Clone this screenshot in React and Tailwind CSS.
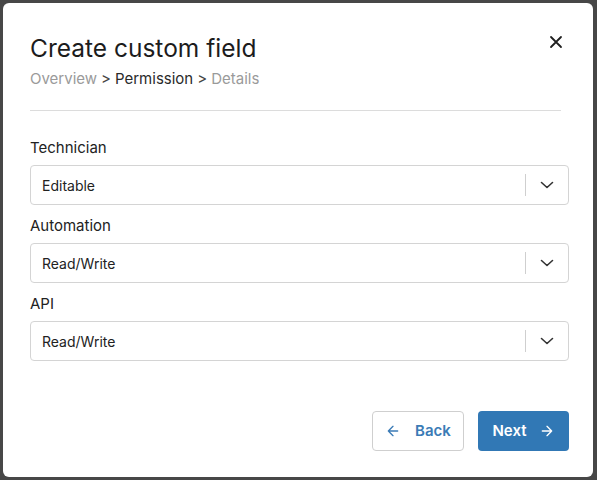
import React from "react";

function Chevron() {
  return (
    <svg width="14" height="8" viewBox="0 0 14 8" fill="none" stroke="#333" strokeWidth="1.6" strokeLinecap="round" strokeLinejoin="round">
      <path d="M1.5 1.5l5.5 5 5.5-5" />
    </svg>
  );
}

function Select({ value }) {
  return (
    <div className="flex h-[40px] items-center rounded-[4px] border border-[#d4d4d4] bg-white">
      <div className="flex-1 pl-[11px] text-[14px] text-[#222]">{value}</div>
      <div className="h-[22px] w-px bg-[#cfcfcf]" />
      <div className="flex w-[42px] items-center justify-center">
        <Chevron />
      </div>
    </div>
  );
}

function Field({ label, value, first }) {
  return (
    <div className={first ? "" : "mt-[11px]"}>
      <div className="mb-[7px] text-[15px] leading-[20px] text-[#222]">{label}</div>
      <Select value={value} />
    </div>
  );
}

function Sep() {
  return <span className="mx-[4px] text-[#444]">&gt;</span>;
}

export default function App() {
  return (
    <div className="h-[480px] w-[597px] bg-[#474747] p-[3px] pr-[4px]" style={{ fontFamily: "Inter, 'Noto Sans', sans-serif" }}>
      <div className="relative h-full w-full rounded-[6px] bg-white pl-[27px] pr-[24px] pt-[29px]">
        <button className="absolute right-[30px] top-[32px] text-[#222]">
          <svg width="14" height="14" viewBox="0 0 14 14" fill="none" stroke="#1f1f1f" strokeWidth="1.8" strokeLinecap="round">
            <path d="M2 2l10 10M12 2L2 12" />
          </svg>
        </button>
        <div className="text-[24.5px] leading-[32px] text-[#1c1c1c]">Create custom field</div>
        <div className="mt-[5px] flex items-center text-[15px] leading-[20px]">
          <span className="text-[#9a9a9a]">Overview</span>
          <Sep />
          <span className="text-[#2a2a2a]">Permission</span>
          <Sep />
          <span className="text-[#9a9a9a]">Details</span>
        </div>
        <div className="mr-[8px] mt-[21px] h-px bg-[#dcdcdc]" />
        <div className="mt-[27px]">
          <Field label="Technician" value="Editable" first />
          <Field label="Automation" value="Read/Write" />
          <Field label="API" value="Read/Write" />
        </div>
        <div className="mt-[50px] flex justify-end gap-[14px]">
          <button className="flex h-[40px] w-[92px] items-center justify-center gap-[14px] rounded-[4px] border border-[#cfcfcf] bg-white text-[15px] font-semibold text-[#3b7bb6]">
            <svg width="16" height="16" viewBox="0 0 24 24" fill="none" stroke="#3b7bb6" strokeWidth="2" strokeLinecap="round" strokeLinejoin="round">
              <path d="M19 12H5M12 19l-7-7 7-7" />
            </svg>
            Back
          </button>
          <button className="flex h-[40px] w-[91px] items-center justify-center gap-[12px] rounded-[4px] bg-[#3178b5] text-[15px] font-semibold text-white">
            Next
            <svg width="16" height="16" viewBox="0 0 24 24" fill="none" stroke="#fff" strokeWidth="2" strokeLinecap="round" strokeLinejoin="round">
              <path d="M5 12h14M12 5l7 7-7 7" />
            </svg>
          </button>
        </div>
      </div>
    </div>
  );
}
